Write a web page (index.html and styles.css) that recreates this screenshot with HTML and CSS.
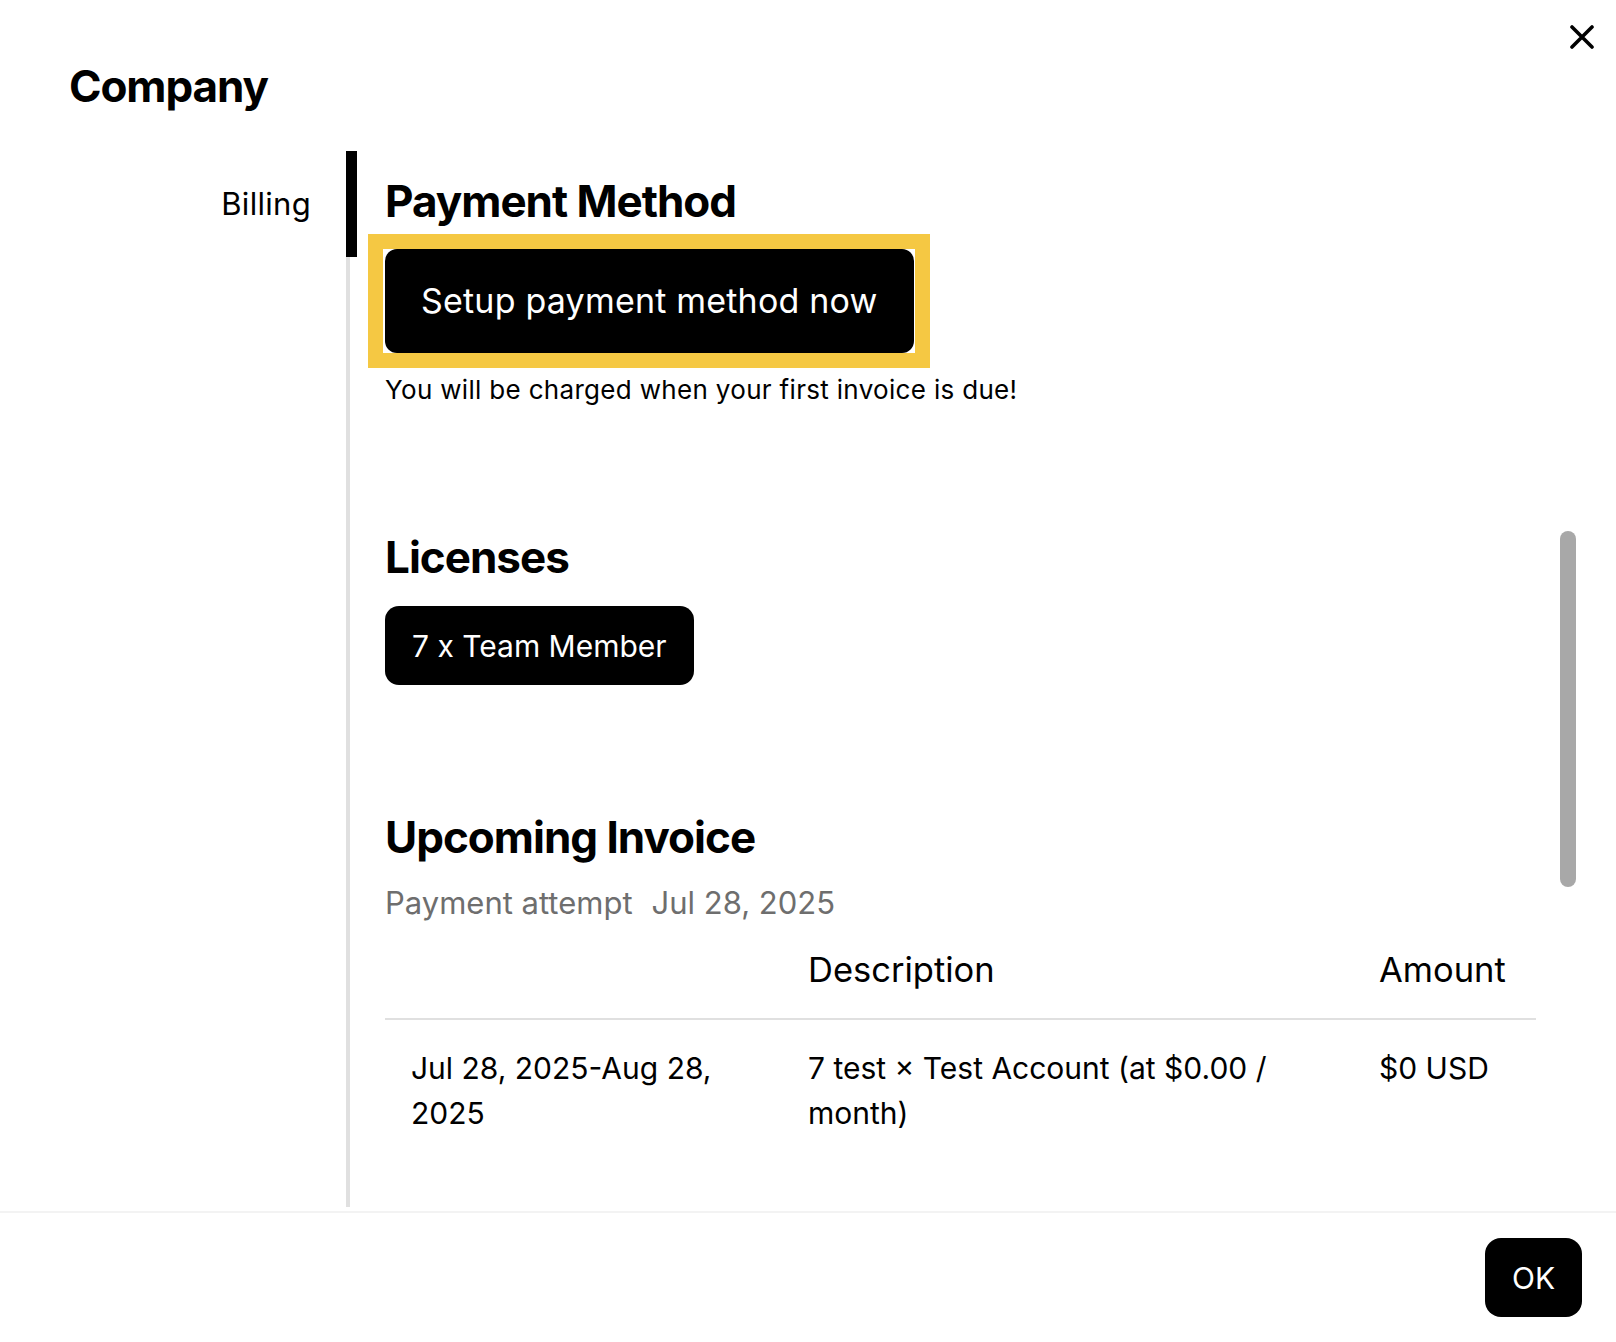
FILE: index.html
```html
<!DOCTYPE html>
<html lang="en">
<head>
<meta charset="utf-8">
<title>Company - Billing</title>
<link rel="stylesheet" href="styles.css">
</head>
<body>
<div class="dialog">
  <button class="close" aria-label="Close">
    <svg width="24" height="24" viewBox="0 0 24 24"><path d="M2 2 L22 22 M22 2 L2 22" stroke="#000" stroke-width="3.6" stroke-linecap="round" fill="none"/></svg>
  </button>
  <h1 class="title">Company</h1>
  <div class="main">
    <nav class="nav">
      <div class="nav-item active">Billing</div>
    </nav>
    <div class="content">
      <section class="section">
        <h2 class="section-title">Payment Method</h2>
        <button class="btn-setup">Setup payment method now</button>
        <p class="note">You will be charged when your first invoice is due!</p>
      </section>
      <section class="section section-gap">
        <h2 class="section-title">Licenses</h2>
        <div class="badge">7 x Team Member</div>
      </section>
      <section class="section section-gap2">
        <h2 class="section-title">Upcoming Invoice</h2>
        <div class="attempt"><span>Payment attempt</span><span class="attempt-date">Jul 28, 2025</span></div>
        <div class="invoice">
          <div class="inv-row inv-head">
            <div class="cell"></div>
            <div class="cell">Description</div>
            <div class="cell">Amount</div>
          </div>
          <div class="inv-row inv-body">
            <div class="cell">Jul 28, 2025-Aug 28, 2025</div>
            <div class="cell">7 test × Test Account (at $0.00 / month)</div>
            <div class="cell">$0 USD</div>
          </div>
        </div>
      </section>
    </div>
    <div class="scroll-thumb"></div>
  </div>
  <footer class="footer">
    <button class="btn-ok">OK</button>
  </footer>
</div>
</body>
</html>
```

FILE: styles.css
```css
* { box-sizing: border-box; }
html, body {
  margin: 0;
  padding: 0;
  background: #fff;
}
body {
  font-family: "Inter", "Noto Sans", "Liberation Sans", sans-serif;
  color: #000;
  width: 1616px;
  height: 1342px;
  overflow: hidden;
}
.dialog {
  position: relative;
  width: 1616px;
  height: 1342px;
}
.close {
  position: absolute;
  top: 25px;
  left: 1570px;
  width: 24px;
  height: 24px;
  padding: 0;
  border: 0;
  background: none;
  display: block;
}
.close svg { display: block; }
.title {
  margin: 0;
  padding: 60px 0 0 69px;
  font-size: 44px;
  line-height: 52px;
  font-weight: 700;
  letter-spacing: -1.1px;
}
.main {
  position: relative;
  display: flex;
  height: 1056px;
  margin-top: 39px;
  margin-bottom: 4px;
}
.nav {
  width: 346px;
  flex: none;
}
.nav-item {
  position: relative;
  height: 106px;
  display: flex;
  align-items: center;
  justify-content: flex-end;
  padding-right: 35px;
  font-size: 31px;
  line-height: 40px;
  letter-spacing: 0.3px;
}
.nav-item.active::after {
  content: "";
  position: absolute;
  top: 0;
  right: -11px;
  width: 11px;
  height: 106px;
  background: #000;
  z-index: 2;
}
.content {
  flex: 1;
  border-left: 4px solid #e0e0e0;
  padding: 24px 80px 0 35px;
  overflow: hidden;
}
.section-title {
  margin: 0;
  font-size: 44px;
  line-height: 52px;
  font-weight: 700;
  letter-spacing: -1px;
}
.btn-setup {
  position: relative;
  display: flex;
  align-items: center;
  height: 104px;
  margin-top: 22px;
  padding: 0 36px;
  border: 0;
  border-radius: 12px;
  background: #000;
  color: #fff;
  font-family: inherit;
  font-size: 34px;
  line-height: 40px;
  letter-spacing: 0.2px;
}
.btn-setup::after {
  content: "";
  position: absolute;
  top: -15px;
  bottom: -15px;
  left: -17px;
  right: -16px;
  border: 15px solid #f5c843;
  pointer-events: none;
}
.note {
  margin: 19px 0 0;
  font-size: 26px;
  line-height: 36px;
  letter-spacing: 0.32px;
}
.section-gap { margin-top: 123px; }
.section-gap2 { margin-top: 126px; }
.badge {
  display: inline-flex;
  align-items: center;
  height: 79px;
  margin-top: 23px;
  padding: 0 27px;
  border-radius: 14px;
  background: #000;
  color: #fff;
  font-size: 30px;
  line-height: 40px;
}
.attempt {
  margin-top: 20px;
  font-size: 31px;
  line-height: 40px;
  color: #6e6e6e;
}
.attempt-date { margin-left: 19px; }
.invoice {
  margin-top: 27px;
  font-size: 30px;
}
.inv-row {
  display: grid;
  grid-template-columns: 396px 571px 1fr;
}
.inv-head {
  font-size: 34.5px;
  line-height: 40px;
  border-bottom: 2px solid #e0e0e0;
}
.inv-head .cell {
  padding: 0 27px 28px;
}
.inv-body .cell {
  padding: 26px 27px 25px;
  line-height: 45px;
}
.inv-body .cell:first-child { padding-left: 26px; }
.scroll-thumb {
  position: absolute;
  left: 1560px;
  top: 380px;
  width: 16px;
  height: 356px;
  border-radius: 8px;
  background: #a8a8a8;
}
.footer {
  border-top: 2px solid #f3f3f3;
  display: flex;
  justify-content: flex-end;
  padding: 25px 34px 0 0;
}
.btn-ok {
  width: 97px;
  height: 79px;
  border: 0;
  border-radius: 16px;
  background: #000;
  color: #fff;
  font-family: inherit;
  font-size: 30px;
  line-height: 40px;
  padding: 0;
}
```
